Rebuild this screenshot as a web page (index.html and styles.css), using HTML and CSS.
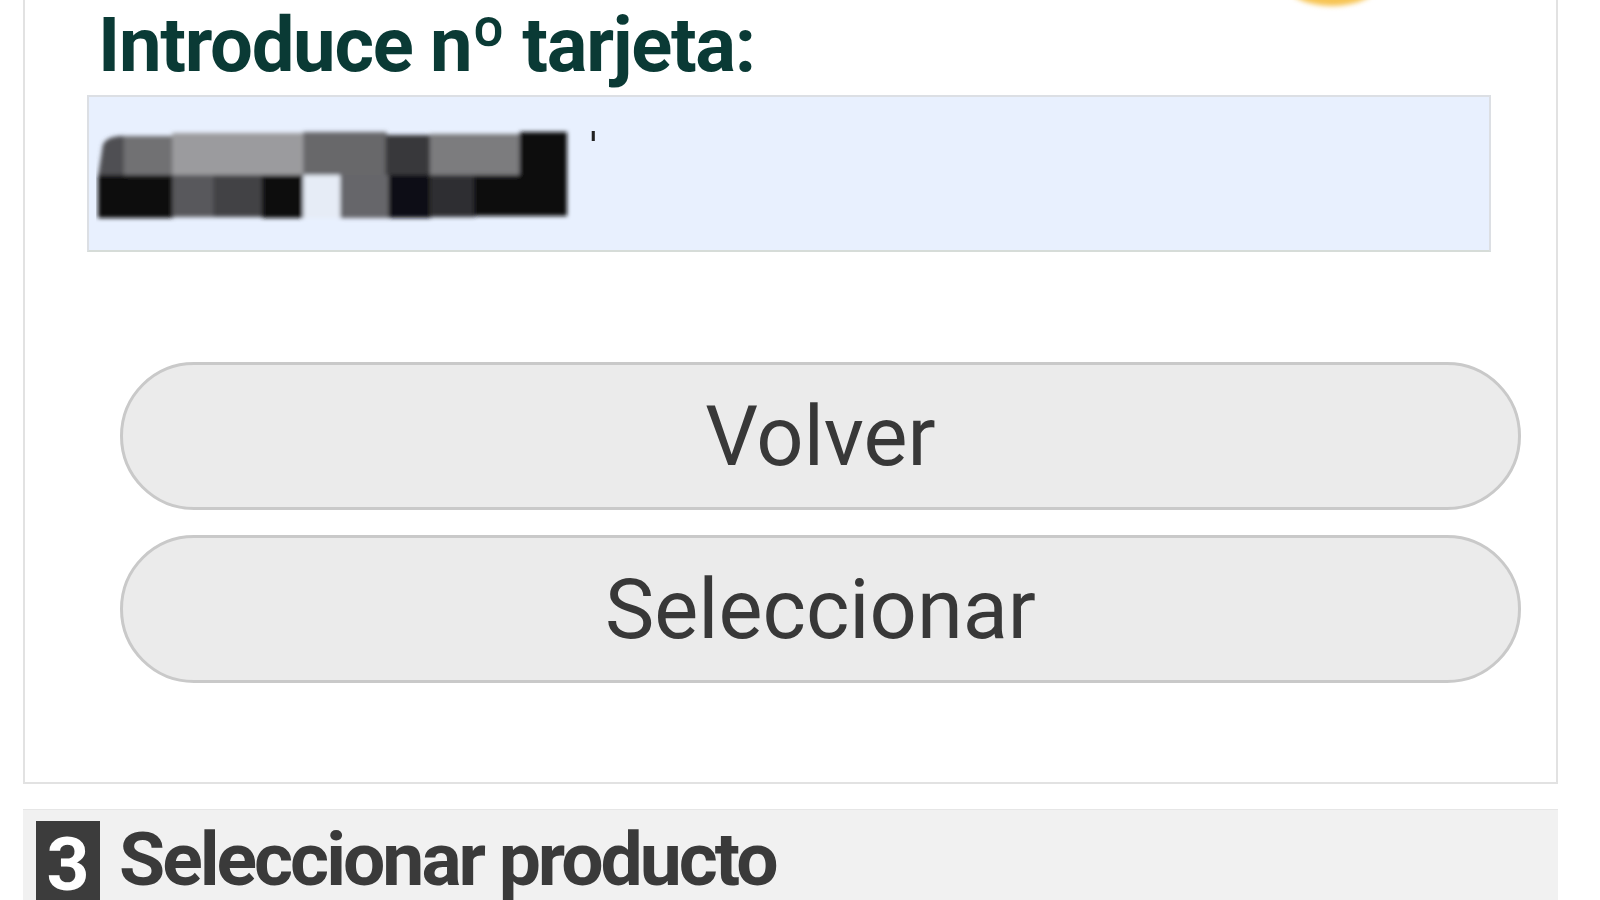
FILE: index.html
```html
<!DOCTYPE html>
<html lang="es">
<head>
<meta charset="utf-8">
<title>Introduce nº tarjeta</title>
<link rel="stylesheet" href="styles.css">
</head>
<body>
<div class="page">
  <div class="sun" aria-hidden="true"></div>
  <section class="card">
    <h2 class="card-title">Introduce nº tarjeta:</h2>
    <div class="card-input" role="textbox" aria-label="Número de tarjeta">
      <svg class="redacted" width="505" height="100" viewBox="0 0 490 100" preserveAspectRatio="none" aria-hidden="true">
        <defs>
          <filter id="soft" x="-5%" y="-10%" width="110%" height="120%">
            <feGaussianBlur stdDeviation="2"/>
          </filter>
        </defs>
        <g filter="url(#soft)">
          <path d="M6 22 Q6 11 22 9 L28 9 L28 49 L2 49 Z" fill="#505052"/>
          <rect x="27" y="9" width="48" height="40" fill="#717173"/>
          <rect x="74" y="6" width="128" height="43" fill="#9b9b9e"/>
          <rect x="201" y="5" width="81" height="44" fill="#68686b"/>
          <rect x="281" y="8" width="44" height="41" fill="#38383a"/>
          <rect x="324" y="7" width="88" height="42" fill="#7b7b7e"/>
          <rect x="411" y="5" width="46" height="44" fill="#0f0f10"/>
          <rect x="2" y="48" width="73" height="43" fill="#0b0b0b"/>
          <rect x="74" y="48" width="41" height="42" fill="#58585b"/>
          <rect x="114" y="48" width="48" height="42" fill="#434345"/>
          <rect x="161" y="48" width="41" height="43" fill="#0d0d0d"/>
          <rect x="201" y="48" width="37" height="43" fill="#e6ecf6"/>
          <rect x="237" y="48" width="48" height="43" fill="#66666a"/>
          <rect x="284" y="48" width="41" height="43" fill="#111112"/>
          <rect x="324" y="48" width="44" height="42" fill="#2e2e30"/>
          <rect x="367" y="48" width="90" height="41" fill="#080808"/>
        </g>
        <rect x="481" y="4" width="3" height="10" fill="#222"/>
      </svg>
    </div>
    <div class="card-actions">
      <button class="pill-btn" type="button">Volver</button>
      <button class="pill-btn" type="button">Seleccionar</button>
    </div>
  </section>
  <header class="step">
    <span class="step-num">3</span>
    <h2 class="step-title">Seleccionar producto</h2>
  </header>
</div>
</body>
</html>
```
FILE: styles.css
```css
* { box-sizing: border-box; }

html, body {
  margin: 0;
  padding: 0;
  background: #ffffff;
  font-family: Roboto, "Liberation Sans", Arial, sans-serif;
  overflow: hidden;
}

.page {
  position: relative;
  width: 1600px;
  height: 900px;
  overflow: hidden;
}

.sun {
  position: absolute;
  left: 1284px;
  top: -44px;
  width: 96px;
  height: 50px;
  border-radius: 50%;
  background: #f7c452;
  filter: blur(2.5px);
}

.card {
  margin-left: 23px;
  width: 1535px;
  border: 2px solid #e2e2e2;
  border-top: none;
  background: #fff;
  padding-bottom: 99px;
}

.card-title {
  margin: 0 0 0 73px;
  font-size: 76px;
  font-weight: 700;
  line-height: normal;
  color: #0a3a35;
  letter-spacing: -1.3px;
}

.card-input {
  margin: 5px 65px 0 62px;
  height: 157px;
  background: #e8f0fe;
  border: 2px solid #dcdfe4;
  border-bottom-color: #d6dcd8;
  padding: 30px 0 0 7px;
}

.redacted { display: block; }

.card-actions {
  display: flex;
  flex-direction: column;
  gap: 25px;
  margin: 110px 0 0 95px;
  width: 1401px;
}

.pill-btn {
  display: block;
  width: 100%;
  height: 148px;
  border: 3px solid #c9c9c9;
  border-radius: 74px;
  background: #ebebeb;
  color: #383838;
  font-family: Roboto, "Liberation Sans", Arial, sans-serif;
  font-size: 83px;
  font-weight: 400;
  line-height: normal;
  padding: 0;
  text-align: center;
}

.step {
  margin: 25px 0 0 23px;
  width: 1535px;
  height: 120px;
  background: #f1f1f1;
  border-top: 1px solid #e6e6e6;
  display: flex;
  align-items: flex-start;
  padding-left: 13px;
}

.step-num {
  margin-top: 11px;
  width: 64px;
  height: 110px;
  background: #3c3c3c;
  color: #ffffff;
  font-size: 75px;
  font-weight: 700;
  line-height: 86px;
  text-align: center;
}

.step-title {
  margin: 5px 0 0 19px;
  font-size: 75px;
  font-weight: 700;
  line-height: normal;
  color: #3a3a3a;
  letter-spacing: -3px;
}
```
